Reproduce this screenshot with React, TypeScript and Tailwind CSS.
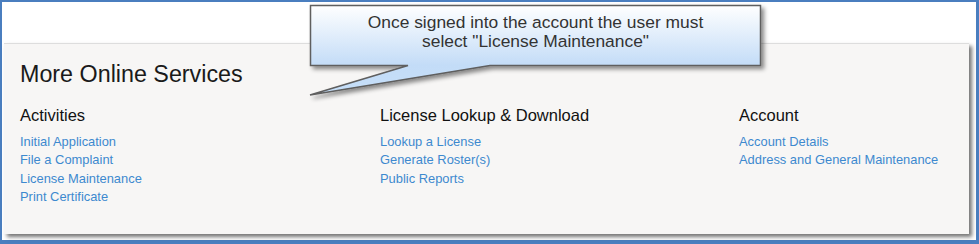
const activities = ['Initial Application', 'File a Complaint', 'License Maintenance', 'Print Certificate'];
const lookup = ['Lookup a License', 'Generate Roster(s)', 'Public Reports'];
const account = ['Account Details', 'Address and General Maintenance'];

function LinkColumn({ title, links }: { title: string; links: string[] }) {
  return (
    <div>
      <h3 className="text-[16.5px] leading-[20px] text-[#111]">{title}</h3>
      <ul className="mt-[8px]">
        {links.map((l) => (
          <li key={l} className="text-[12.9px] leading-[18.5px]">
            <a href="#" className="text-[#3d89cf]">
              {l}
            </a>
          </li>
        ))}
      </ul>
    </div>
  );
}

function Callout() {
  return (
    <div className="absolute left-0 top-0 w-[979px] h-[120px] pointer-events-none">
      <svg width="979" height="120" className="absolute left-0 top-0">
        <defs>
          <linearGradient id="calloutFill" gradientUnits="userSpaceOnUse" x1="0" y1="5" x2="0" y2="95">
            <stop offset="0" stopColor="#ffffff" />
            <stop offset="0.67" stopColor="#c3dcf7" />
            <stop offset="1" stopColor="#c6dff9" />
          </linearGradient>
          <filter id="calloutShadow" x="-10%" y="-30%" width="130%" height="180%">
            <feDropShadow dx="3" dy="3" stdDeviation="2" floodColor="#000" floodOpacity="0.45" />
          </filter>
        </defs>
        <path
          d="M310.5 5.5 H760.5 V65.5 H490 L310 95 L408 65.5 H310.5 Z"
          fill="url(#calloutFill)"
          stroke="#5e5e5e"
          strokeWidth="1.5"
          strokeLinejoin="miter"
          filter="url(#calloutShadow)"
        />
      </svg>
      <p className="absolute left-[310px] top-[12.5px] w-[451px] text-center text-[17.4px] leading-[19px] text-[#333]">
        Once signed into the account the user must
        <br />
        select "License Maintenance"
      </p>
    </div>
  );
}

export default function App() {
  return (
    <div className="relative w-[979px] h-[244px] font-['Liberation_Sans',Arial,sans-serif]">
      <div className="w-full h-full bg-white border-t-2 border-l-2 border-r-[3px] border-b-4 border-[#4a7ebf]">
        <div className="h-[41px]" />
        <div className="ml-[2px] w-[965px] h-[191px] bg-[#f7f6f5] border-t border-[#dddddd] shadow-[3px_3px_4px_rgba(0,0,0,0.55)] pl-[16px] pt-[17px]">
          <h2 className="text-[23.3px] leading-[26px] text-[#1a1a1a]">More Online Services</h2>
          <div className="mt-[17.5px] grid grid-cols-[360px_359px_1fr]">
            <LinkColumn title="Activities" links={activities} />
            <LinkColumn title="License Lookup & Download" links={lookup} />
            <LinkColumn title="Account" links={account} />
          </div>
        </div>
      </div>
      <Callout />
    </div>
  );
}
